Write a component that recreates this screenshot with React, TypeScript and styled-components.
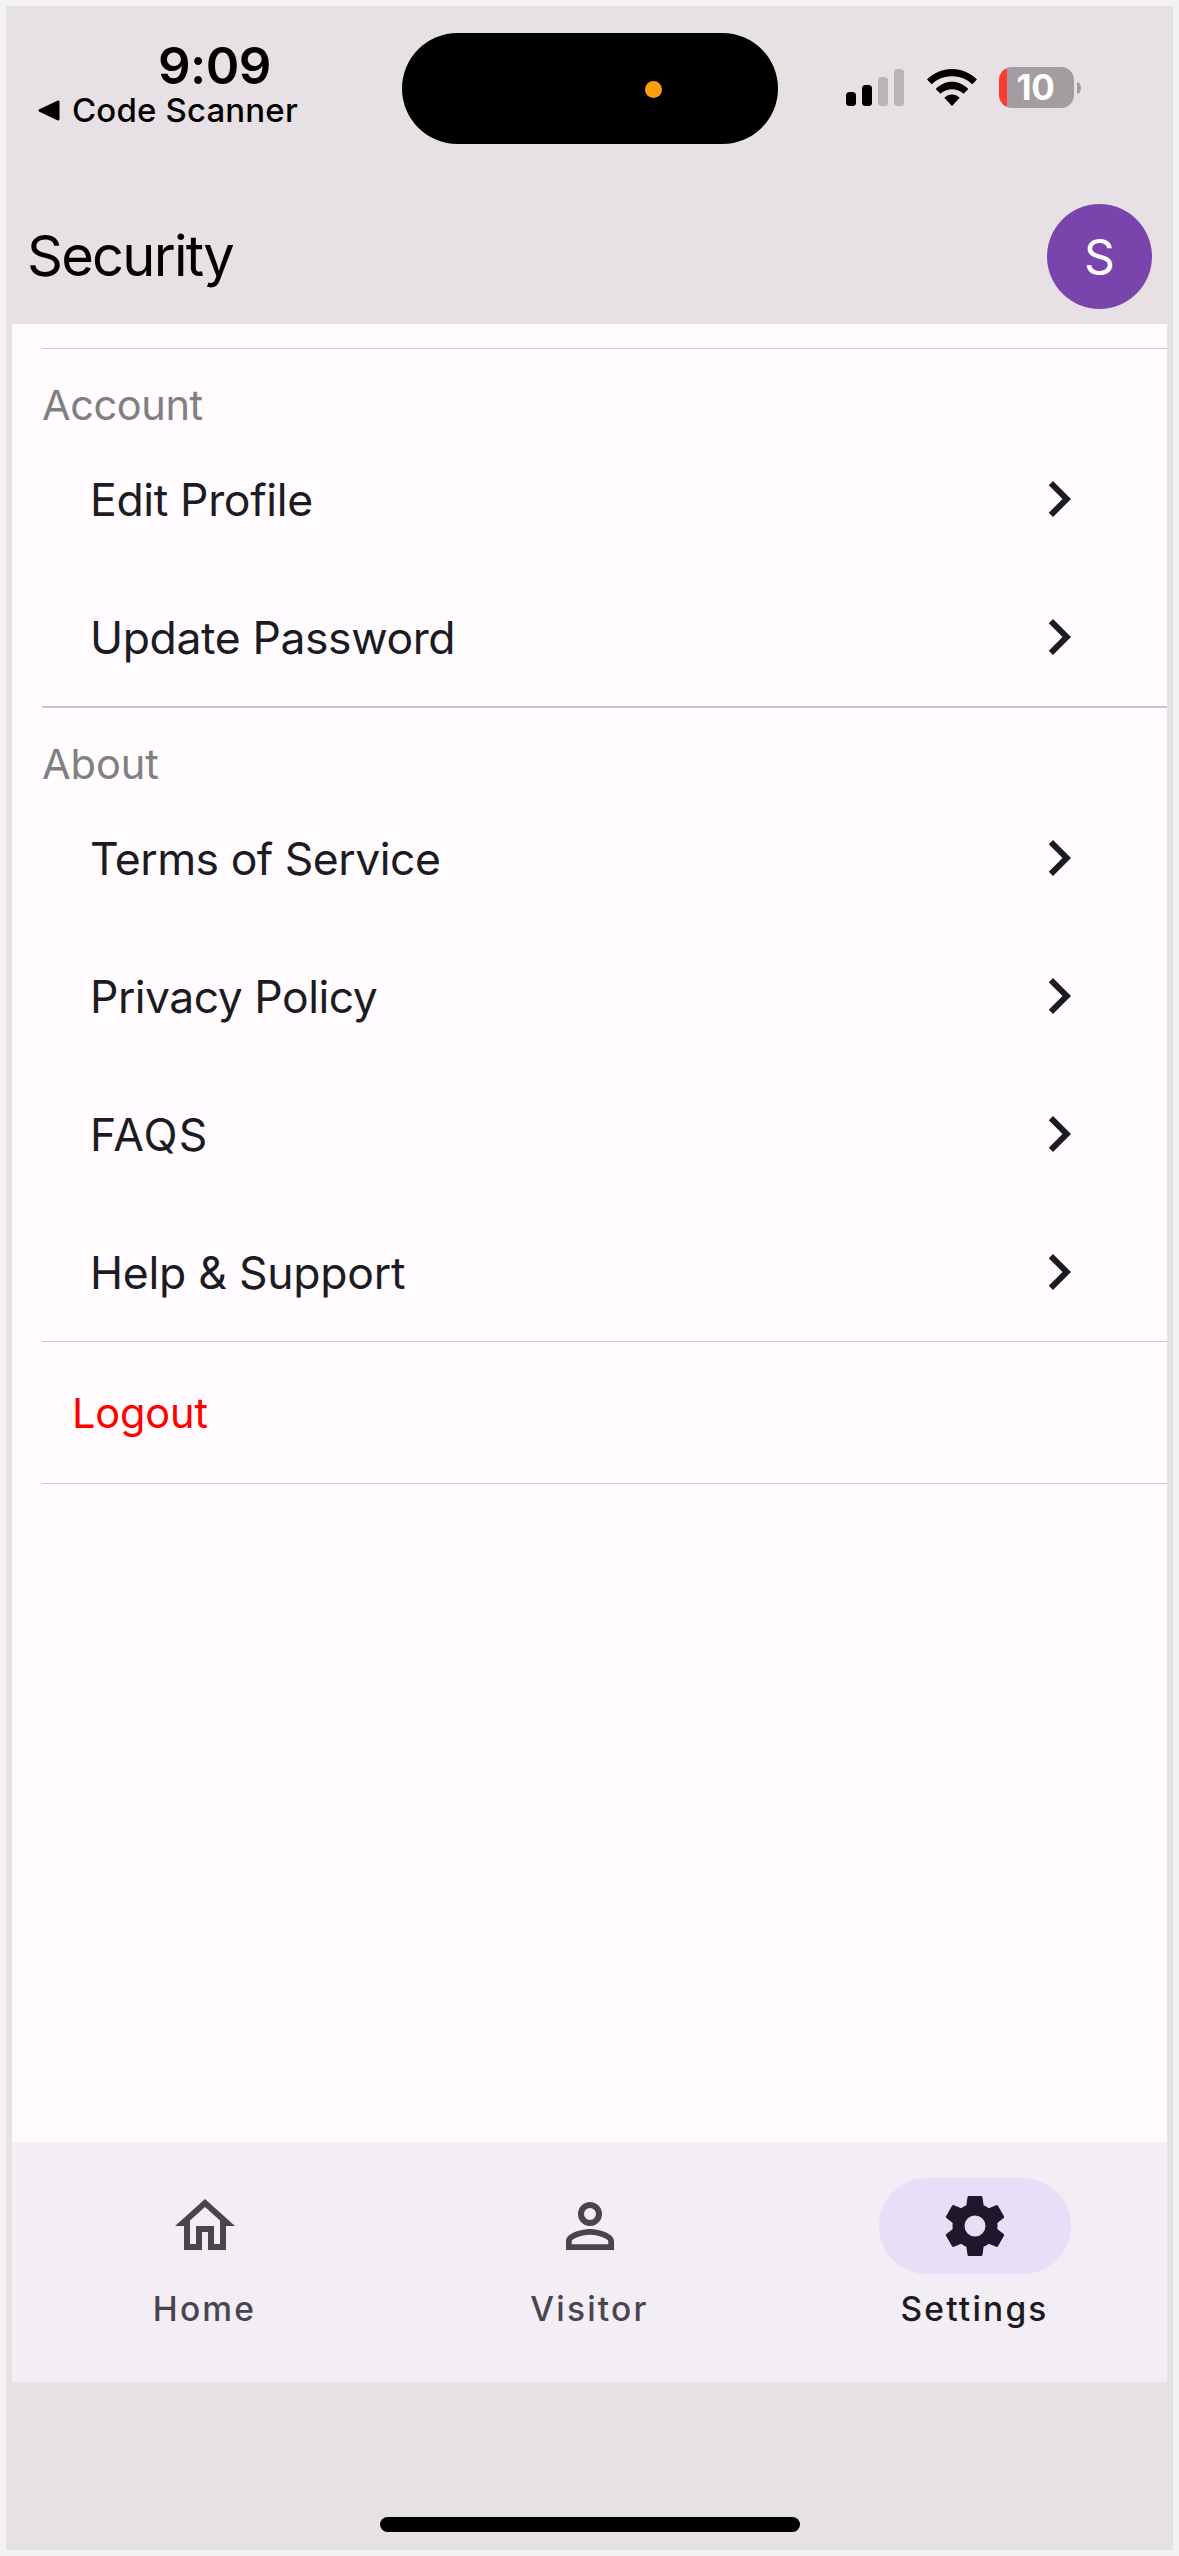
import React from "react";
import styled, { createGlobalStyle } from "styled-components";

const GlobalStyle = createGlobalStyle`
  * { box-sizing: border-box; }
  body { margin: 0; background: #f2f2f2; }
`;

const Screen = styled.div`
  width: 1179px;
  height: 2556px;
  padding: 6px;
  background: #f2f2f2;
  font-family: Inter, "Liberation Sans", sans-serif;
`;

const Phone = styled.div`
  display: flex;
  flex-direction: column;
  height: 2544px;
  background: #e7e1e5;
`;

const StatusBar = styled.div`
  display: grid;
  grid-template-columns: 396px 376px 1fr;
  align-items: start;
  height: 198px;
  padding-top: 27px;
`;

const StatusLeft = styled.div`
  display: flex;
  flex-direction: column;
`;

const Clock = styled.div`
  margin: 3px 0 0 152px;
  font-size: 51px;
  line-height: 60px;
  height: 60px;
  font-weight: 600;
  letter-spacing: -0.6px;
  color: #000;
`;

const BackLink = styled.div`
  display: flex;
  align-items: center;
  gap: 12px;
  margin: -7px 0 0 32px;
  font-size: 33px;
  line-height: 42px;
  font-weight: 500;
  letter-spacing: 0.15px;
  color: #000;
  white-space: nowrap;
`;

const Island = styled.div`
  display: flex;
  align-items: center;
  justify-content: flex-end;
  height: 110.6px;
  margin-top: 0.4px;
  padding-right: 116px;
  border-radius: 56px;
  background: #000;
`;

const IslandDot = styled.div`
  width: 17px;
  height: 17px;
  margin-top: 1px;
  border-radius: 50%;
  background: #ff9f0a;
`;

const StatusRight = styled.div`
  display: flex;
  align-items: center;
  margin-top: 34px;
  padding-left: 68px;
  height: 41px;
`;

const Signal = styled.div`
  display: flex;
  align-items: flex-end;
  gap: 6px;
  height: 37px;
`;

const Bar = styled.span<{ $h: number; $on?: boolean }>`
  width: 10px;
  height: ${(p) => p.$h}px;
  border-radius: 3.5px;
  background: ${(p) => (p.$on ? "#000" : "#b9b4b8")};
`;

const WifiIcon = styled.svg`
  width: 50px;
  height: 37px;
  margin: 0 22px 0 23px;
`;

const Battery = styled.div`
  display: flex;
  align-items: center;
  justify-content: center;
  width: 75px;
  height: 41px;
  padding-right: 2px;
  border-radius: 13px;
  background: linear-gradient(to right, #ff3b30 8px, #a29da1 8px);
  color: #fff;
  font-size: 35px;
  line-height: 41px;
  font-weight: 700;
  letter-spacing: -0.4px;
`;

const BatteryNub = styled.span`
  width: 4px;
  height: 12px;
  margin-left: 3px;
  border-radius: 0 4px 4px 0 / 0 6px 6px 0;
  background: #a29da1;
`;

const Header = styled.header`
  display: flex;
  align-items: center;
  justify-content: space-between;
  height: 120px;
  padding: 0 21px 15px;
`;

const Title = styled.h1`
  margin: 0 0 1px;
  font-size: 56px;
  line-height: 80px;
  font-weight: 400;
  letter-spacing: -1.75px;
  color: #000;
`;

const Avatar = styled.div`
  display: flex;
  align-items: center;
  justify-content: center;
  width: 105px;
  height: 105px;
  border-radius: 50%;
  background: #7944ab;
  color: #fff;
  font-size: 48px;
  line-height: 60px;
`;

const Content = styled.main`
  flex: 1;
  margin: 0 6px;
  padding: 24px 0 0 30px;
  background: #fffbff;
`;

const Divider = styled.div<{ $thick?: boolean }>`
  height: ${(p) => (p.$thick ? 2 : 1)}px;
  background: #cac4d0;
`;

const SectionLabel = styled.div<{ $tracking: number }>`
  height: 81px;
  padding-top: 31px;
  font-size: 41.5px;
  line-height: 50px;
  letter-spacing: ${(p) => p.$tracking}px;
  color: #808080;
`;

const Row = styled.div`
  display: flex;
  align-items: center;
  justify-content: space-between;
  height: 138px;
  padding: 0 72px 0 48px;
  font-size: 44.5px;
  color: #1c1b1f;
`;

const RowText = styled.span<{ $tracking: number }>`
  padding-top: 2px;
  line-height: 60px;
  letter-spacing: ${(p) => p.$tracking}px;
`;

const Icon = styled.svg`
  display: block;
  width: 72px;
  height: 72px;
  fill: currentColor;
`;

const Logout = styled.div`
  display: flex;
  align-items: center;
  height: 141px;
  padding-left: 30px;
  font-size: 41.5px;
  line-height: 50px;
  letter-spacing: -0.15px;
  color: #ff0000;
`;

const NavBar = styled.nav`
  display: grid;
  grid-template-columns: repeat(3, 1fr);
  height: 240px;
  margin: 0 6px;
  padding-top: 36px;
  background: #f3edf5;
`;

const NavItem = styled.div<{ $active?: boolean }>`
  display: flex;
  flex-direction: column;
  align-items: center;
  gap: 11px;
  color: ${(p) => (p.$active ? "#1c1b1f" : "#49454f")};
`;

const Pill = styled.div<{ $active?: boolean }>`
  display: flex;
  align-items: center;
  justify-content: center;
  width: 192px;
  height: 96px;
  border-radius: 48px;
  color: ${(p) => (p.$active ? "#1d192b" : "#49454f")};
  background: ${(p) => (p.$active ? "#e8def8" : "transparent")};
`;

const NavText = styled.span`
  font-size: 33.5px;
  line-height: 48px;
  font-weight: 500;
  letter-spacing: 2.2px;
`;

const HomeArea = styled.div`
  display: flex;
  align-items: flex-end;
  justify-content: center;
  height: 168px;
  padding-bottom: 18px;
`;

const HomeIndicator = styled.div`
  width: 420px;
  height: 15px;
  border-radius: 8px;
  background: #000;
`;

const CHEVRON = "M8.59 16.58 13.17 12 8.59 7.41 10 6l6 6-6 6z";
const HOME =
  "M12 5.69l5 4.5V18h-2v-6H9v6H7v-7.81l5-4.5M12 3L2 12h3v8h6v-6h2v6h6v-8h3L12 3z";
const PERSON =
  "M12 4A4 4 0 0 1 16 8A4 4 0 0 1 12 12A4 4 0 0 1 8 8A4 4 0 0 1 12 4M12 6A2 2 0 0 0 10 8A2 2 0 0 0 12 10A2 2 0 0 0 14 8A2 2 0 0 0 12 6M12 13C14.67 13 20 14.33 20 17V20H4V17C4 14.33 9.33 13 12 13M12 14.9C9.03 14.9 5.9 16.36 5.9 17V18.1H18.1V17C18.1 16.36 14.97 14.9 12 14.9Z";
const COG =
  "M12,15.5A3.5,3.5 0 0,1 8.5,12A3.5,3.5 0 0,1 12,8.5A3.5,3.5 0 0,1 15.5,12A3.5,3.5 0 0,1 12,15.5M19.43,12.97C19.47,12.65 19.5,12.33 19.5,12C19.5,11.67 19.47,11.34 19.43,11L21.54,9.37C21.73,9.22 21.78,8.95 21.66,8.73L19.66,5.27C19.54,5.05 19.27,4.96 19.05,5.05L16.56,6.05C16.04,5.66 15.5,5.32 14.87,5.07L14.5,2.42C14.46,2.18 14.25,2 14,2H10C9.75,2 9.54,2.18 9.5,2.42L9.13,5.07C8.5,5.32 7.96,5.66 7.44,6.05L4.95,5.05C4.73,4.96 4.46,5.05 4.34,5.27L2.34,8.73C2.21,8.95 2.27,9.22 2.46,9.37L4.57,11C4.53,11.34 4.5,11.67 4.5,12C4.5,12.33 4.53,12.65 4.57,12.97L2.46,14.63C2.27,14.78 2.21,15.05 2.34,15.27L4.34,18.73C4.46,18.95 4.73,19.03 4.95,18.95L7.44,17.94C7.96,18.34 8.5,18.68 9.13,18.93L9.5,21.58C9.54,21.82 9.75,22 10,22H14C14.25,22 14.46,21.82 14.5,21.58L14.87,18.93C15.5,18.67 16.04,18.34 16.56,17.94L19.05,18.95C19.27,19.03 19.54,18.95 19.66,18.73L21.66,15.27C21.78,15.05 21.73,14.78 21.54,14.63L19.43,12.97Z";

const Glyph = ({ d }: { d: string }) => (
  <Icon viewBox="0 0 24 24">
    <path d={d} />
  </Icon>
);

const MenuRow = ({ label, tracking = -0.4 }: { label: string; tracking?: number }) => (
  <Row>
    <RowText $tracking={tracking}>{label}</RowText>
    <Glyph d={CHEVRON} />
  </Row>
);

const tabs = [
  { label: "Home", icon: HOME, active: false },
  { label: "Visitor", icon: PERSON, active: false },
  { label: "Settings", icon: COG, active: true },
];

export default function App() {
  return (
    <Screen>
      <GlobalStyle />
      <Phone>
        <StatusBar>
          <StatusLeft>
            <Clock>9:09</Clock>
            <BackLink>
              <svg width="22" height="21" viewBox="0 0 22 21">
                <path
                  d="M2 10.5 20 2V19Z"
                  fill="#000"
                  stroke="#000"
                  strokeWidth="3"
                  strokeLinejoin="round"
                />
              </svg>
              <span>Code Scanner</span>
            </BackLink>
          </StatusLeft>
          <Island>
            <IslandDot />
          </Island>
          <StatusRight>
            <Signal>
              <Bar $h={14} $on />
              <Bar $h={21} $on />
              <Bar $h={29} />
              <Bar $h={37} />
            </Signal>
            <WifiIcon viewBox="0 0 50 37">
              <path d="M0 10.5C7 3.8 15.5 0 25 0S43 3.8 50 10.5L45.3 15.3C39.8 10 33 7.2 25 7.2S10.2 10 4.7 15.3Z" />
              <path d="M8.7 20C13.2 15.5 18.8 12.8 25 12.8S36.8 15.5 41.3 20L36.5 24.7C33.3 21.8 29.5 20.2 25 20.2S16.7 21.8 13.5 24.7Z" />
              <path d="M17.3 28.8C19.5 26.7 22 25.5 25 25.5S30.5 26.7 32.7 28.8L25 37Z" />
            </WifiIcon>
            <Battery>10</Battery>
            <BatteryNub />
          </StatusRight>
        </StatusBar>
        <Header>
          <Title>Security</Title>
          <Avatar>S</Avatar>
        </Header>
        <Content>
          <Divider />
          <SectionLabel $tracking={-0.4}>Account</SectionLabel>
          <MenuRow label="Edit Profile" tracking={-0.35} />
          <MenuRow label="Update Password" />
          <Divider $thick />
          <SectionLabel $tracking={-0.05}>About</SectionLabel>
          <MenuRow label="Terms of Service" tracking={-0.5} />
          <MenuRow label="Privacy Policy" tracking={-0.52} />
          <MenuRow label="FAQS" tracking={1.1} />
          <MenuRow label="Help &amp; Support" tracking={-0.25} />
          <Divider />
          <Logout>Logout</Logout>
          <Divider />
        </Content>
        <NavBar>
          {tabs.map((t) => (
            <NavItem key={t.label} $active={t.active}>
              <Pill $active={t.active}>
                <Glyph d={t.icon} />
              </Pill>
              <NavText>{t.label}</NavText>
            </NavItem>
          ))}
        </NavBar>
        <HomeArea>
          <HomeIndicator />
        </HomeArea>
      </Phone>
    </Screen>
  );
}
